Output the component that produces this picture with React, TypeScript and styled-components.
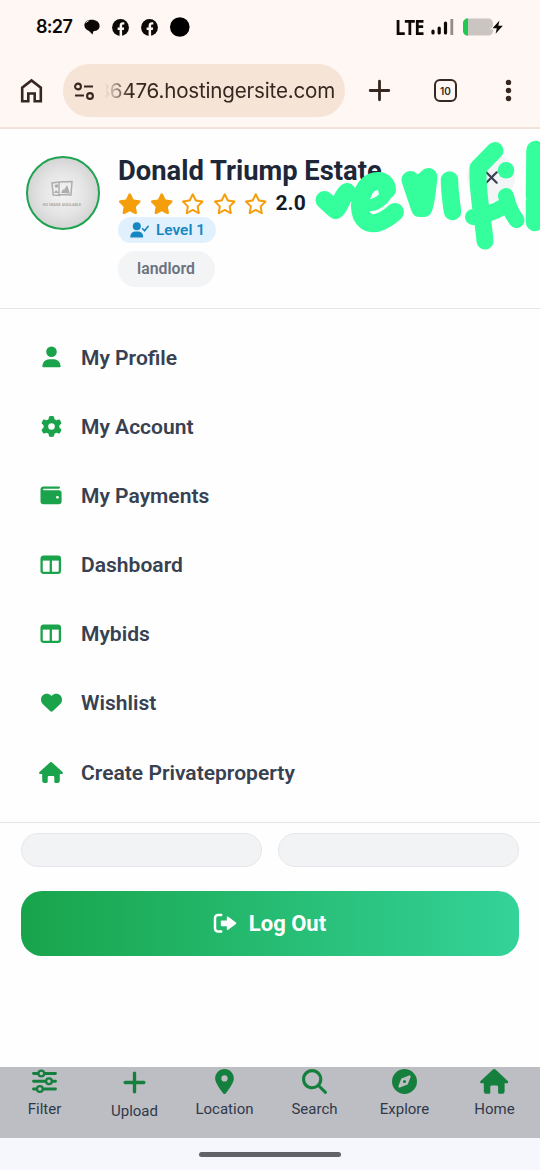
import React from "react";
import styled, { createGlobalStyle } from "styled-components";
import {
  FaGear, FaHeart, FaPlus, FaLocationDot, FaMagnifyingGlass, FaCompass, FaStar, FaRegStar,
} from "react-icons/fa6";

const GlobalStyle = createGlobalStyle`
  *, *::before, *::after { box-sizing: border-box; }
  body { margin: 0; background: #fefefe; font-family: Roboto, "Liberation Sans", sans-serif; }
`;

const Screen = styled.div`
  position: relative;
  width: 540px;
  height: 1170px;
  display: flex;
  flex-direction: column;
  overflow: hidden;
  background: #fefefe;
`;

const BrowserChrome = styled.header`
  height: 129px;
  flex: none;
  background: #fff7f4;
  border-bottom: 2px solid #f3e2d9;
`;

const StatusBar = styled.div`
  display: flex;
  align-items: center;
  justify-content: space-between;
  height: 54px;
  padding: 0 37.5px 0 36px;
`;

const StatusGroup = styled.div<{ $gap: number }>`
  display: flex;
  align-items: center;
  gap: ${(p) => p.$gap}px;
  svg { display: block; }
`;

const Clock = styled.span`
  width: 36px;
  font: 600 18px/24px Inter, sans-serif;
  letter-spacing: -0.7px;
  white-space: nowrap;
  color: #0c0806;
`;

const Network = styled.span`
  width: 28px;
  font: 700 20.5px/24px "Open Sans", sans-serif;
  letter-spacing: -1px;
  color: #0c0806;
  transform: scaleX(0.9);
  transform-origin: left;
`;

const Toolbar = styled.div`
  display: flex;
  align-items: center;
  height: 53px;
  margin-top: 10px;
  padding-left: 19px;
  color: #362721;
  svg { display: block; flex: none; }
`;

const AddressPill = styled.div`
  display: flex;
  align-items: center;
  width: 282px;
  height: 53px;
  margin: 0 23px 0 19px;
  padding-left: 11px;
  border-radius: 27px;
  background: #f6e4d7;
`;

const Address = styled.span`
  width: 230px;
  margin-left: 10px;
  overflow: hidden;
  display: flex;
  justify-content: flex-end;
  white-space: nowrap;
  font: 400 20.6px/30px Inter, sans-serif;
  letter-spacing: -0.2px;
  -webkit-mask-image: linear-gradient(90deg, transparent, #000 26px);
  mask-image: linear-gradient(90deg, transparent, #000 26px);
`;

const TabCount = styled.span`
  display: grid;
  place-items: center;
  width: 23px;
  height: 23px;
  margin: 0 48px 0 43px;
  border: 2.4px solid #362721;
  border-radius: 6px;
  font: 600 10px/12px Inter, sans-serif;
`;

const ProfileHeader = styled.section`
  display: flex;
  align-items: flex-start;
  height: 180px;
  flex: none;
  padding: 27px 26px 0;
  gap: 18px;
  border-bottom: 1px solid #e3e5e8;
`;

const Avatar = styled.div`
  display: flex;
  flex-direction: column;
  align-items: center;
  flex: none;
  width: 74px;
  height: 74px;
  padding-top: 22px;
  padding-right: 2px;
  border: 2.5px solid #1fa351;
  border-radius: 50%;
  background: radial-gradient(circle, #f4f4f4 0%, #e4e4e4 45%, #c3c3c3 100%);
`;

const AvatarCaption = styled.span`
  margin-top: 4px;
  font: 700 3.6px/5px Roboto, sans-serif;
  letter-spacing: 0.1px;
  white-space: nowrap;
  color: #a6a6a6;
`;

const Identity = styled.div`
  display: flex;
  flex-direction: column;
  align-items: flex-start;
`;

const Name = styled.h1`
  margin: -1px 0 1px;
  font-size: 27.35px;
  line-height: 32px;
  font-weight: 700;
  white-space: nowrap;
  color: #1d2738;
`;

const Rating = styled.div`
  display: flex;
  align-items: center;
  height: 29px;
  color: #f59e0b;
  svg { display: block; width: 23.5px; height: 21.5px; margin: 2px 8px 0 0; }
`;

const Score = styled.span`
  font-size: 21px;
  line-height: 25px;
  font-weight: 700;
  color: #151b28;
  margin-top: 1px;
`;

const LevelBadge = styled.div`
  display: flex;
  align-items: center;
  gap: 7px;
  height: 26px;
  width: 98px;
  padding-left: 12px;
  border-radius: 13px;
  background: #e0f1fd;
  color: #1787c2;
  font-size: 15.4px;
  font-weight: 600;
  white-space: nowrap;
`;

const RoleBadge = styled.div`
  display: grid;
  place-items: center;
  width: 97px;
  height: 36px;
  margin-top: 8px;
  padding: 0 1px 1px 0;
  border-radius: 18px;
  background: #f3f4f6;
  color: #6b7280;
  font-size: 15.8px;
  font-weight: 600;
`;

const CloseButton = styled.button`
  position: absolute;
  left: 467px;
  top: 153px;
  width: 48px;
  height: 48px;
  display: grid;
  place-items: center;
  padding: 0;
  border: 0;
  border-radius: 50%;
  background: #f3f4f6;
`;

const Scribble = styled.svg`
  position: absolute;
  left: 300px;
  top: 130px;
  pointer-events: none;
`;

const Menu = styled.nav`
  display: flex;
  flex-direction: column;
  flex: none;
  height: 514px;
  padding: 13.6px 38px 0;
  border-bottom: 1px solid #e3e5e8;
`;

const MenuItem = styled.a`
  display: flex;
  align-items: center;
  height: 69.17px;
  gap: 17px;
  color: #374151;
  font-size: 21.05px;
  font-weight: 600;
`;

const MenuIcon = styled.span`
  display: grid;
  place-items: center;
  width: 26px;
  color: #1aa34a;
`;

const Actions = styled.section`
  display: grid;
  grid-template-columns: 1fr 1fr;
  gap: 24px 16px;
  padding: 10px 21px 0;
`;

const EmptyPill = styled.div`
  height: 34px;
  border: 1px solid #e5e7eb;
  border-radius: 17px;
  background: #f2f3f5;
`;

const LogoutButton = styled.button`
  grid-column: 1 / -1;
  display: flex;
  align-items: center;
  justify-content: center;
  gap: 12px;
  height: 65px;
  padding: 0 1px 0 0;
  border: 0;
  border-radius: 21px;
  background: linear-gradient(90deg, #18a44b, #34d399);
  color: #fff;
  font: 700 22px/28px Roboto, sans-serif;
`;

const BottomNav = styled.nav`
  display: grid;
  grid-template-columns: repeat(6, 1fr);
  height: 71px;
  margin-top: auto;
  flex: none;
  background: #bdbec3;
`;

const NavItem = styled.a`
  display: flex;
  flex-direction: column;
  align-items: center;
  padding: 2px 1px 0 0;
  gap: 5px;
  color: #2f394b;
  font-size: 15px;
  line-height: 20px;
  svg { display: block; color: #15803d; }
`;

const GestureArea = styled.footer`
  display: flex;
  justify-content: center;
  height: 32px;
  padding-top: 14px;
  flex: none;
  background: #f5f7fc;
`;

const GestureHandle = styled.div`
  width: 142px;
  height: 5px;
  border-radius: 3px;
  background: #626366;
`;

const FacebookMark = () => (
  <svg width="17" height="17" viewBox="0 0 17 17">
    <circle cx="8.5" cy="8.5" r="8.4" fill="#0c0806" />
    <path d="M7.6 17v-6.1H5.6V8.4h2V6.9c0-2.6 1.3-3.7 3.5-3.7h1.2v2.4h-1c-.9 0-1.2.5-1.2 1.3v1.5h2.1l-.4 2.5h-1.7V17z" fill="#fff7f4" />
  </svg>
);

const PersonIcon = () => (
  <svg width="19" height="22" viewBox="0 0 19 22" fill="currentColor">
    <circle cx="9.5" cy="5.8" r="5.3" />
    <path d="M.4 20.6c0-4.4 3-7.4 7-7.4h4.2c4 0 7 3 7 7.4 0 .4-.3.7-.7.7H1.1a.7.7 0 0 1-.7-.7z" />
  </svg>
);

const PersonCheckIcon = () => (
  <svg width="19" height="16" viewBox="0 0 19 16" fill="currentColor">
    <circle cx="6.8" cy="4.2" r="4" />
    <path d="M.3 15c0-3.3 2.2-5.5 5-5.5h2.9c2.8 0 5 2.2 5 5.5 0 .3-.2.5-.5.5H.8a.5.5 0 0 1-.5-.5z" />
    <path d="m12.6 6.7 2 2 3.6-4.4" fill="none" stroke="currentColor" strokeWidth="1.6" strokeLinecap="round" />
  </svg>
);

const WalletIcon = () => (
  <svg width="22" height="19" viewBox="0 0 22 19">
    <path d="M3.4.5h15.4c.7 0 1.2.5 1.2 1.1s-.5 1.1-1.2 1.1H3.8a.8.8 0 0 0 0 1.6h15.1c1.6 0 2.7 1.1 2.7 2.6v8.5c0 1.6-1.1 2.8-2.7 2.8H3.4A2.9 2.9 0 0 1 .5 15.3V3.4C.5 1.8 1.8.5 3.4.5z" fill="currentColor" />
    <circle cx="17.4" cy="11.3" r="1.4" fill="#fefefe" />
  </svg>
);

const ColumnsIcon = () => (
  <svg width="22" height="19" viewBox="0 0 22 19" fill="none" stroke="currentColor" strokeWidth="2.3">
    <rect x="1.6" y="1.7" width="18.3" height="16.1" rx="1.9" />
    <path d="M1.6 3.4h18.3" strokeWidth="4.4" />
    <path d="M10.8 3v14.5" />
  </svg>
);

const HouseIcon = ({ width }: { width: number }) => (
  <svg width={width} height={width * 0.88} viewBox="0 0 24 21.1" fill="currentColor">
    <path d="M10.9.5a1.6 1.6 0 0 1 2.2 0l10.4 9.6c.8.8.3 2-.8 2h-1.9v6.7c0 1.3-.9 2.2-2.2 2.2h-2.1c-.7 0-1.2-.5-1.2-1.2v-4.6c0-.7-.5-1.2-1.2-1.2H9.900c-.7 0-1.200.5-1.200 1.200v4.600c0 .7-.5 1.200-1.200 1.200H5.400c-1.300 0-2.200-.9-2.200-2.200v-6.700H1.300c-1.100 0-1.600-1.200-.8-2z" />
  </svg>
);

const ExitIcon = () => (
  <svg width="24" height="21" viewBox="0 0 24 21" fill="none" stroke="currentColor" strokeLinejoin="round">
    <path d="M8.2 2H5a3 3 0 0 0-3 3v10.6a3 3 0 0 0 3 3h3.2" strokeWidth="2.5" strokeLinecap="round" />
    <path d="M8.7 8.3h6V4.5l7.7 5.8-7.7 5.8v-3.8h-6z" fill="currentColor" strokeWidth="1.8" />
  </svg>
);

const FilterIcon = () => (
  <svg width="25" height="25" viewBox="0 0 25 25" fill="none" stroke="currentColor" strokeLinecap="round">
    <path d="M1.5 4.5h4.500m6.500 0h11M1.500 12.200h12.200m6.400 0h3.400M1.500 20h3.200m6.400 0h12.400" strokeWidth="2.9" />
    <circle cx="9.3" cy="4.5" r="2.9" strokeWidth="2.2" />
    <circle cx="17" cy="12.2" r="2.9" strokeWidth="2.2" />
    <circle cx="7.9" cy="20" r="2.9" strokeWidth="2.2" />
  </svg>
);

const menu = [
  { label: "My Profile", icon: <PersonIcon /> },
  { label: "My Account", icon: <FaGear size={21} /> },
  { label: "My Payments", icon: <WalletIcon /> },
  { label: "Dashboard", icon: <ColumnsIcon /> },
  { label: "Mybids", icon: <ColumnsIcon /> },
  { label: "Wishlist", icon: <FaHeart size={21} /> },
  { label: "Create Privateproperty", icon: <HouseIcon width={24} /> },
];

const tabs = [
  { label: "Filter", icon: <FilterIcon /> },
  { label: "Upload", icon: <FaPlus size={27} /> },
  { label: "Location", icon: <FaLocationDot size={25} /> },
  { label: "Search", icon: <FaMagnifyingGlass size={25} /> },
  { label: "Explore", icon: <FaCompass size={25} /> },
  { label: "Home", icon: <HouseIcon width={28.4} /> },
];

export default function App() {
  return (
    <Screen>
      <GlobalStyle />
      <BrowserChrome>
        <StatusBar>
          <StatusGroup $gap={12}>
            <Clock>8:27</Clock>
            <svg width="16" height="16" viewBox="0 0 16 16">
              <path d="M7.8.8C11.8.8 15.6 3 15.6 7c0 3.4-3 5.2-6.2 5.2L8.6 15.5 5 12C2.5 11.3.4 9.2.4 6.1.4 3 3.5.8 7.8.8z" fill="#0c0806" />
              <path d="M1.6 4.2C2.2 3 3.4 2.3 4.6 2" stroke="#fff7f4" strokeWidth=".9" fill="none" />
            </svg>
            <FacebookMark />
            <FacebookMark />
            <svg width="20" height="20" viewBox="0 0 20 20">
              <circle cx="9.8" cy="10" r="9.8" fill="#000" />
            </svg>
          </StatusGroup>
          <StatusGroup $gap={8}>
            <Network>LTE</Network>
            <svg width="23" height="18" viewBox="0 0 23 18" strokeLinecap="round" strokeWidth="3.2" stroke="#0c0806">
              <path d="M2 13V15M8.2 10V15M14.5 5V15" />
              <path d="M20.8 1V17" stroke="#938c89" strokeLinecap="butt" strokeWidth="2.8" />
            </svg>
            <svg width="41" height="18" viewBox="0 0 41 18">
              <path d="M6 .5h20c3 0 5 2 5 5v7c0 3-2 5-5 5H6c-3 0-5-2-5-5v-7c0-3 2-5 5-5z" fill="#cbc5c1" />
              <path d="M6 .5v17c-3 0-5-2-5-5v-7c0-3 2-5 5-5z" fill="#20c94f" />
              <path d="M37.5 2.5 30.5 10.2h4.300l-1.200 5.500 7.200-8h-4.500z" fill="#0c0806" stroke="#fff7f4" strokeWidth="2" paintOrder="stroke" />
            </svg>
          </StatusGroup>
        </StatusBar>
        <Toolbar>
          <svg width="25" height="27" viewBox="0 0 25 27" fill="none" stroke="#362721" strokeWidth="2.6">
            <path d="M3.2 24.2V10.7l9.3-7.2 9.3 7.2v13.5h-6.100v-7.700H9.300v7.700z" />
          </svg>
          <AddressPill>
            <svg width="21" height="20" viewBox="0 0 21 20" fill="none" stroke="#362721" strokeWidth="2.1">
              <circle cx="4" cy="5.5" r="2.9" /><path d="M10 5.5h9M1 14.5h9" /><circle cx="16" cy="15" r="2.9" />
            </svg>
            <Address>36476.hostingersite.com</Address>
          </AddressPill>
          <svg width="23" height="23" viewBox="0 0 23 23" stroke="#362721" strokeWidth="2.8" strokeLinecap="round"><path d="M11.5 2.2v18.6M2.2 11.5h18.6" /></svg>
          <TabCount>10</TabCount>
          <svg width="7" height="23" viewBox="0 0 7 23" fill="#362721">
            <circle cx="3.5" cy="3.4" r="2.7" /><circle cx="3.5" cy="11.5" r="2.7" /><circle cx="3.5" cy="19.5" r="2.7" />
          </svg>
        </Toolbar>
      </BrowserChrome>

      <ProfileHeader>
        <Avatar>
          <svg width="22" height="19" viewBox="0 0 22 19" fill="none" stroke="#adadad" strokeWidth="1.5">
            <path d="M8 2 1 3l1.2 12 7 .5M8 2l13-.5-1 13.5-12-.5z" />
            <circle cx="5.5" cy="6" r="1" fill="#adadad" />
            <path d="m10 13 2-4 1 1 3-5 3 8.5z" fill="#adadad" strokeWidth="0" />
            <path d="m3 13 2-3 3 3z" fill="#adadad" strokeWidth="0" />
          </svg>
          <AvatarCaption>NO IMAGE AVAILABLE</AvatarCaption>
        </Avatar>
        <Identity>
          <Name>Donald Triump Estate</Name>
          <Rating>
            {[0, 1, 2, 3, 4].map((n) => (n < 2 ? <FaStar key={n} /> : <FaRegStar key={n} />))}
            <Score>2.0</Score>
          </Rating>
          <LevelBadge><PersonCheckIcon />Level 1</LevelBadge>
          <RoleBadge>landlord</RoleBadge>
        </Identity>
      </ProfileHeader>

      <Menu>
        {menu.map((m) => (
          <MenuItem key={m.label}><MenuIcon>{m.icon}</MenuIcon>{m.label}</MenuItem>
        ))}
      </Menu>

      <Actions>
        <EmptyPill />
        <EmptyPill />
        <LogoutButton><ExitIcon />Log Out</LogoutButton>
      </Actions>

      <BottomNav>
        {tabs.map((t) => (
          <NavItem key={t.label}>{t.icon}{t.label}</NavItem>
        ))}
      </BottomNav>
      <GestureArea><GestureHandle /></GestureArea>

      <CloseButton aria-label="Close">
        <svg width="13" height="13" viewBox="0 0 12 12" stroke="#374151" strokeWidth="2" strokeLinecap="round"><path d="m1.2 1.2 9.6 9.6m0-9.6-9.6 9.6" /></svg>
      </CloseButton>
      {/* Freehand marker strokes over the header */}
      <Scribble width="240" height="130" viewBox="0 0 240 130" fill="none" stroke="#34ff9c" strokeWidth="18" strokeLinecap="round" strokeLinejoin="round">
        <path d="M24.5 70C29 74 32 77 35.5 80C40 77 42 66 47 62" fill="#34ff9c" />
        <path d="M64 75C76 77 86 69 88 59" strokeWidth="12" />
        <path d="M87 60C87 49 73 48 66 57C58 69 58 85 66 91C74 97 86 90 95 82" strokeWidth="18" />
        <path d="M110.5 50C114 60 117 70 120 78H123.5C127 68 127 57 128.500 47Q119 58 110.500 50Z" fill="#34ff9c" />
        <path d="M149.5 50C149.5 61 151 71 152.5 81.5" strokeWidth="17.5" />
        <path d="M195 20.5L178 38C177 66 183 86 185 111" strokeWidth="17" />
        <path d="M173 87C187 86 198 80 205 76" strokeWidth="16" />
        <circle cx="206" cy="40.3" r="8.3" fill="#34ff9c" stroke="none" />
        <path d="M206 66C208 76 212 84 216.5 90" strokeWidth="16" />
        <path d="M235.5 20L235 66M235 71V92" strokeWidth="18.5" />
      </Scribble>
    </Screen>
  );
}
